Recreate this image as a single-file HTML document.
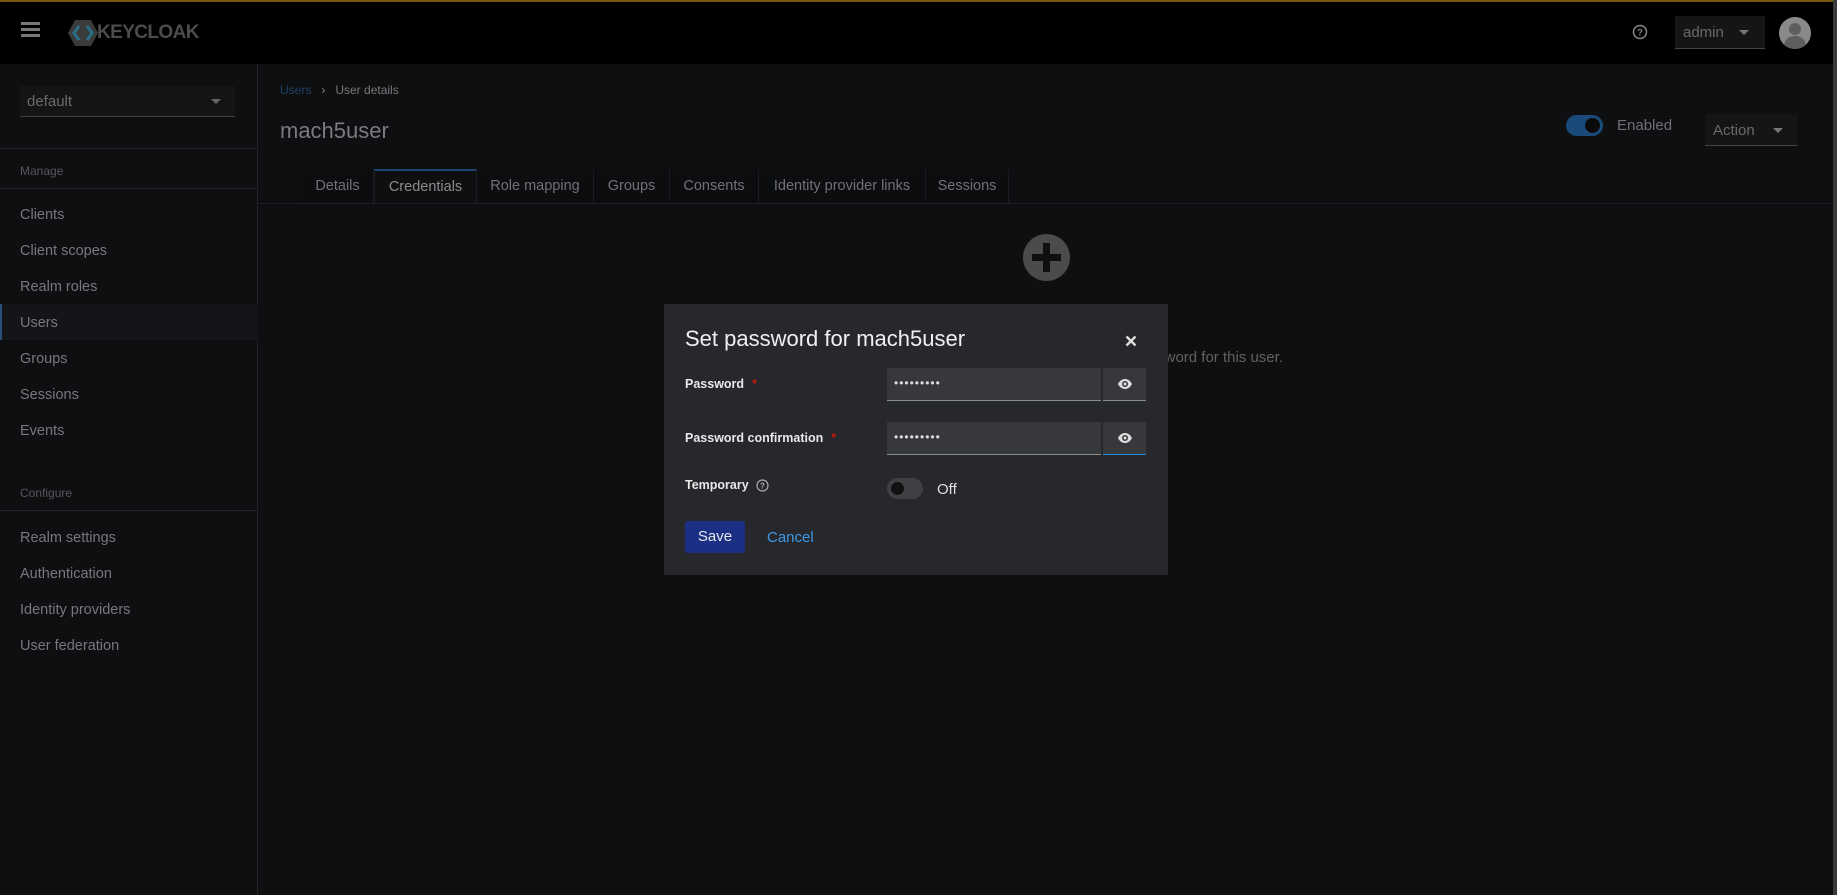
<!DOCTYPE html>
<html><head><meta charset="utf-8"><style>
*{box-sizing:border-box;margin:0;padding:0}
body{width:1837px;height:895px;overflow:hidden;background:#0e0f11;font-family:"Liberation Sans",sans-serif;position:relative;color:#7e8083}
.a{position:absolute}
.hdr{left:0;top:0;width:1837px;height:64px;background:#000;border-top:2px solid #7a5a10}
.side{left:0;top:64px;width:258px;height:831px;background:#0e0f11;border-right:1px solid #222326}
.nav{left:20px;font-size:14.5px;color:#76787b}
.line{height:1px;background:#222326}
.tab{top:169px;height:34px;font-size:14.5px;color:#707275;display:flex;align-items:center;justify-content:center;background:#0c0d0f;border-right:1px solid #1b1c1f}
.lbl{font-size:12.5px;font-weight:bold;color:#e8e8e8;left:685px}
.req{color:#c9190b;margin-left:8px}
.inp{left:887px;width:214px;height:33px;background:#36383c;border-bottom:1px solid #8a8d90;color:#ddd;font-size:12px;padding:8px 7px;letter-spacing:1px}
.eye{left:1103px;width:43px;height:33px;background:#36383c;border-bottom:1px solid #8a8d90;display:flex;align-items:center;justify-content:center}
</style></head><body>
<div class="a hdr"></div>
<div class="a" style="left:21px;top:22px;width:19px;height:3px;background:#777;box-shadow:0 6px 0 #777,0 12px 0 #777"></div>
<svg class="a" style="left:68px;top:20px" width="30" height="26" viewBox="0 0 30 26"><polygon points="7,0 23,0 30,13 23,26 7,26 0,13" fill="#3a3b3d"/><path d="M11 6 L6 13 L11 20 M19 6 L24 13 L19 20" stroke="#2a6f87" stroke-width="3" fill="none"/></svg>
<div class="a" style="left:97px;top:22px;font-size:19px;font-weight:bold;color:#4b4c4e;letter-spacing:-0.6px">KEYCLOAK</div>
<svg class="a" style="left:1632px;top:24px" width="16" height="16" viewBox="0 0 16 16"><circle cx="8" cy="8" r="6.5" stroke="#8a8a8a" stroke-width="1.5" fill="none"/><text x="8" y="11.5" font-size="9" font-weight="bold" fill="#8a8a8a" text-anchor="middle" font-family="Liberation Sans">?</text></svg>
<div class="a" style="left:1675px;top:16px;width:90px;height:33px;background:#151515;border-bottom:1px solid #444;font-size:15px;color:#6a6a6a;padding:8px 8px">admin<span style="position:absolute;left:64px;top:14px;border:5px solid transparent;border-top-color:#777;border-bottom:0"></span></div>
<div class="a" style="left:1779px;top:17px;width:32px;height:32px;border-radius:50%;background:#8a8a8a;overflow:hidden"><div class="a" style="left:10px;top:6px;width:12px;height:12px;border-radius:50%;background:#5e5e5e"></div><div class="a" style="left:5px;top:19px;width:22px;height:16px;border-radius:10px 10px 0 0;background:#5e5e5e"></div></div>

<div class="a side"></div>
<div class="a" style="left:20px;top:86px;width:215px;height:31px;background:#151515;border-bottom:1px solid #444;font-size:15px;color:#6a6a6a;padding:7px 7px">default<span style="position:absolute;left:191px;top:13px;border:5px solid transparent;border-top-color:#666;border-bottom:0"></span></div>
<div class="a line" style="left:0;top:148px;width:258px"></div>
<div class="a" style="left:20px;top:164px;font-size:12px;color:#55575a">Manage</div>
<div class="a line" style="left:0;top:188px;width:258px"></div>
<div class="a" style="left:0;top:304px;width:258px;height:36px;background:#141518;border-left:2px solid #2b4f78"></div>
<div class="a nav" style="top:207px">Clients</div>
<div class="a nav" style="top:243px">Client scopes</div>
<div class="a nav" style="top:279px">Realm roles</div>
<div class="a nav" style="top:315px">Users</div>
<div class="a nav" style="top:351px">Groups</div>
<div class="a nav" style="top:387px">Sessions</div>
<div class="a nav" style="top:423px">Events</div>
<div class="a" style="left:20px;top:486px;font-size:12px;color:#55575a">Configure</div>
<div class="a line" style="left:0;top:510px;width:258px"></div>
<div class="a nav" style="top:530px">Realm settings</div>
<div class="a nav" style="top:566px">Authentication</div>
<div class="a nav" style="top:602px">Identity providers</div>
<div class="a nav" style="top:638px">User federation</div>

<div class="a" style="left:280px;top:83px;font-size:12px"><span style="color:#1f4468">Users</span><span style="color:#888;margin:0 10px">›</span><span style="color:#78797b">User details</span></div>
<div class="a" style="left:280px;top:118px;font-size:22px;color:#7a7b7e">mach5user</div>
<div class="a" style="left:1566px;top:115px;width:37px;height:21px;border-radius:11px;background:#1a4a7a"><div class="a" style="left:19px;top:3px;width:15px;height:15px;border-radius:50%;background:#0a0a0a"></div></div>
<div class="a" style="left:1617px;top:117px;font-size:15px;color:#6f7073">Enabled</div>
<div class="a" style="left:1705px;top:114px;width:92px;height:32px;background:#151515;border-bottom:1px solid #444;font-size:15px;color:#6a6a6a;padding:8px 8px">Action<span style="position:absolute;left:68px;top:14px;border:5px solid transparent;border-top-color:#777;border-bottom:0"></span></div>

<div class="a line" style="left:258px;top:203px;width:1579px;background:#1e1f22"></div>
<div class="a tab" style="left:302px;width:72px">Details</div>
<div class="a tab" style="left:374px;width:103px;background:#0e0f11;border-top:2px solid #1b4771;border-left:1px solid #1b1c1f;color:#8a8b8d">Credentials</div>
<div class="a tab" style="left:477px;width:117px">Role mapping</div>
<div class="a tab" style="left:594px;width:76px">Groups</div>
<div class="a tab" style="left:670px;width:89px">Consents</div>
<div class="a tab" style="left:759px;width:167px">Identity provider links</div>
<div class="a tab" style="left:926px;width:83px">Sessions</div>

<div class="a" style="left:1023px;top:234px;width:47px;height:47px;border-radius:50%;background:#4a4b4d"></div>
<div class="a" style="left:1043px;top:243px;width:7px;height:29px;background:#0e0f11"></div>
<div class="a" style="left:1032px;top:254px;width:29px;height:7px;background:#0e0f11"></div>
<div class="a" style="right:554px;top:349px;font-size:15px;color:#606163;white-space:nowrap">Click above button to set a password for this user.</div>
<div class="a" style="left:1833px;top:0;width:4px;height:895px;background:#3a3a3a"></div>

<div class="a" style="left:664px;top:304px;width:504px;height:271px;background:#26282c"></div>
<div class="a" style="left:685px;top:326px;font-size:22px;color:#f0f0f0">Set password for mach5user</div>
<svg class="a" style="left:1125px;top:335px" width="12" height="12" viewBox="0 0 12 12"><path d="M1.5 1.5L10.5 10.5M10.5 1.5L1.5 10.5" stroke="#ddd" stroke-width="2.4"/></svg>
<div class="a lbl" style="top:377px">Password<span class="req">*</span></div>
<div class="a inp" style="top:368px">•••••••••</div>
<div class="a eye" style="top:368px"><svg width="16" height="12" viewBox="0 0 16 12"><path d="M1 6C3 2 6 1 8 1S13 2 15 6C13 10 10 11 8 11S3 10 1 6Z" fill="#ddd"/><circle cx="8" cy="6" r="3" fill="#36383c"/><circle cx="8" cy="6" r="1.5" fill="#ddd"/></svg></div>
<div class="a lbl" style="top:431px">Password confirmation<span class="req">*</span></div>
<div class="a inp" style="top:422px">•••••••••</div>
<div class="a eye" style="top:422px;border-bottom:1px solid #2b8be0"><svg width="16" height="12" viewBox="0 0 16 12"><path d="M1 6C3 2 6 1 8 1S13 2 15 6C13 10 10 11 8 11S3 10 1 6Z" fill="#ddd"/><circle cx="8" cy="6" r="3" fill="#36383c"/><circle cx="8" cy="6" r="1.5" fill="#ddd"/></svg></div>
<div class="a lbl" style="top:478px">Temporary</div>
<svg class="a" style="left:756px;top:479px" width="13" height="13" viewBox="0 0 13 13"><circle cx="6.5" cy="6.5" r="5.5" stroke="#aaa" stroke-width="1.2" fill="none"/><text x="6.5" y="9.5" font-size="8" font-weight="bold" fill="#aaa" text-anchor="middle" font-family="Liberation Sans">?</text></svg>
<div class="a" style="left:887px;top:478px;width:36px;height:21px;border-radius:11px;background:#3e4044"><div class="a" style="left:4px;top:4px;width:13px;height:13px;border-radius:50%;background:#111"></div></div>
<div class="a" style="left:937px;top:481px;font-size:15px;color:#ddd">Off</div>
<div class="a" style="left:685px;top:521px;width:60px;height:32px;background:#1b2f85;border-radius:3px;color:#e8e8e8;font-size:15px;text-align:center;line-height:32px">Save</div>
<div class="a" style="left:767px;top:529px;font-size:15px;color:#3d9ae8">Cancel</div>
</body></html>
